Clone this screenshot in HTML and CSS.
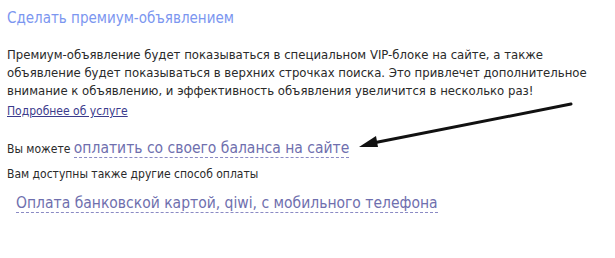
FILE: index.html
```html
<!DOCTYPE html>
<html lang="ru">
<head>
  <meta charset="UTF-8" />
  <title>Премиум-объявление</title>
  <link rel="stylesheet" href="styles.css">
</head>
<body>
  <div class="premium">
    <div class="premium-title">Сделать премиум-объявлением</div>
    <p class="premium-text">
      Премиум-объявление будет показываться в специальном VIP-блоке на сайте, а также
      объявление будет показываться в верхних строчках поиска. Это привлечет дополнительное
      внимание к объявлению, и эффективность объявления увеличится в несколько раз!
    </p>
    <a class="more-link" href="#">Подробнее об услуге</a>

    <div class="pay-row">Вы можете <a class="pay-link" href="#">оплатить со своего баланса на сайте</a><svg class="arrow" width="230" height="60" viewBox="0 0 230 60">
        <line x1="224" y1="3" x2="26" y2="42" stroke="#111" stroke-width="3" stroke-linecap="round"/>
        <polygon points="12,46 29,35 31,46" fill="#111"/>
      </svg></div>
    <div class="pay-other">Вам доступны также другие способ оплаты</div>
    <div class="pay-alt">
      <a class="pay-link" href="#">Оплата банковской картой, qiwi, с мобильного телефона</a>
    </div>
  </div>
</body>
</html>
```

FILE: styles.css
```css
body {
  margin: 0;
  background: #fff;
  font-family: "DejaVu Sans Condensed", "DejaVu Sans", sans-serif;
  color: #2a2a2a;
}
.premium {
  padding: 8px 7px;
}
.premium-title {
  font-size: 15px;
  color: #7b96f0;
  line-height: 20px;
}
.premium-text {
  font-size: 13px;
  line-height: 18px;
  margin: 18px 0 0 0;
}
.more-link {
  font-size: 12px;
  color: #3b3b8c;
  text-decoration: underline;
}
.pay-row {
  position: relative;
  font-size: 12px;
  margin-top: 20px;
}
.pay-link {
  font-size: 15.5px;
  color: #6f6fae;
  text-decoration: none;
  border-bottom: 1px dashed #8a8ac4;
}
.arrow {
  position: absolute;
  left: 340px;
  top: -38px;
}
.pay-other {
  font-size: 12px;
  margin-top: 10px;
}
.pay-alt {
  margin: 12px 0 0 9px;
}
```
